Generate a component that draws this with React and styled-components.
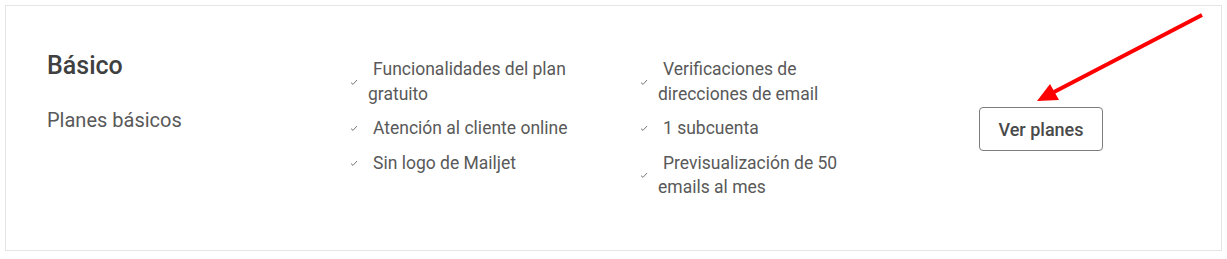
import styled, { createGlobalStyle } from 'styled-components';

const GlobalStyle = createGlobalStyle`
  body {
    margin: 0;
    background: #ffffff;
    font-family: Roboto, "Liberation Sans", Arial, sans-serif;
  }
`;

const Page = styled.div`
  position: relative;
  width: 1227px;
  height: 259px;
  padding: 5px 0 0 5px;
  box-sizing: border-box;
`;

const Card = styled.div`
  display: flex;
  align-items: stretch;
  box-sizing: border-box;
  width: 1217px;
  height: 246px;
  border: 1px solid #e4e4e4;
  padding: 0 0 0 41px;
`;

const Info = styled.div`
  width: 301px;
  padding-top: 45px;
`;

const Title = styled.h2`
  margin: 0;
  font-size: 25px;
  line-height: 30px;
  font-weight: 500;
  color: #404040;
`;

const Subtitle = styled.p`
  margin: 26px 0 0;
  font-size: 20px;
  line-height: 26px;
  color: #595959;
`;

const List = styled.ul`
  list-style: none;
  margin: 0;
  padding: 51px 0 0;
  width: ${(p) => p.$width}px;
  box-sizing: border-box;
  display: flex;
  flex-direction: column;
  gap: 10px;
`;

const Item = styled.li`
  display: flex;
  align-items: center;
  font-size: 17.5px;
  line-height: 24.5px;
  color: #595959;
`;

const Check = styled.svg`
  flex: none;
  width: 8px;
  height: 8px;
  margin: 0 10px 0 2px;
`;

const ItemText = styled.span`
  display: block;
  max-width: 215px;
  text-indent: 5px;
`;

const Action = styled.div`
  display: flex;
  align-items: center;
  padding-top: 2px;
`;

const Button = styled.button`
  width: 124px;
  height: 44px;
  box-sizing: border-box;
  border: 1px solid #7d7d7d;
  border-radius: 4px;
  background: #ffffff;
  font-family: Roboto, "Liberation Sans", Arial, sans-serif;
  font-size: 18px;
  font-weight: 500;
  color: #4a4a4a;
  cursor: pointer;
`;

const Annotation = styled.svg`
  position: absolute;
  top: 0;
  left: 0;
  pointer-events: none;
`;

function Feature({ children }) {
  return (
    <Item>
      <Check viewBox="0 0 8 8">
        <path d="M1 4.6 L3 6.4 L7 2" fill="none" stroke="#777" strokeWidth="1" />
      </Check>
      <ItemText>{children}</ItemText>
    </Item>
  );
}

const left = ['Funcionalidades del plan gratuito', 'Atención al cliente online', 'Sin logo de Mailjet'];
const right = ['Verificaciones de direcciones de email', '1 subcuenta', 'Previsualización de 50 emails al mes'];

export default function App() {
  return (
    <Page>
      <GlobalStyle />
      <Card>
        <Info>
          <Title>Básico</Title>
          <Subtitle>Planes básicos</Subtitle>
        </Info>
        <List $width={290}>
          {left.map((t) => <Feature key={t}>{t}</Feature>)}
        </List>
        <List $width={341}>
          {right.map((t) => <Feature key={t}>{t}</Feature>)}
        </List>
        <Action>
          <Button>Ver planes</Button>
        </Action>
      </Card>
      <Annotation width="1227" height="259" viewBox="0 0 1227 259">
        <line x1="1202" y1="15" x2="1054" y2="92" stroke="#ff0000" strokeWidth="4" />
        <polygon points="1037,101 1050,84 1059,100" fill="#ff0000" />
      </Annotation>
    </Page>
  );
}
